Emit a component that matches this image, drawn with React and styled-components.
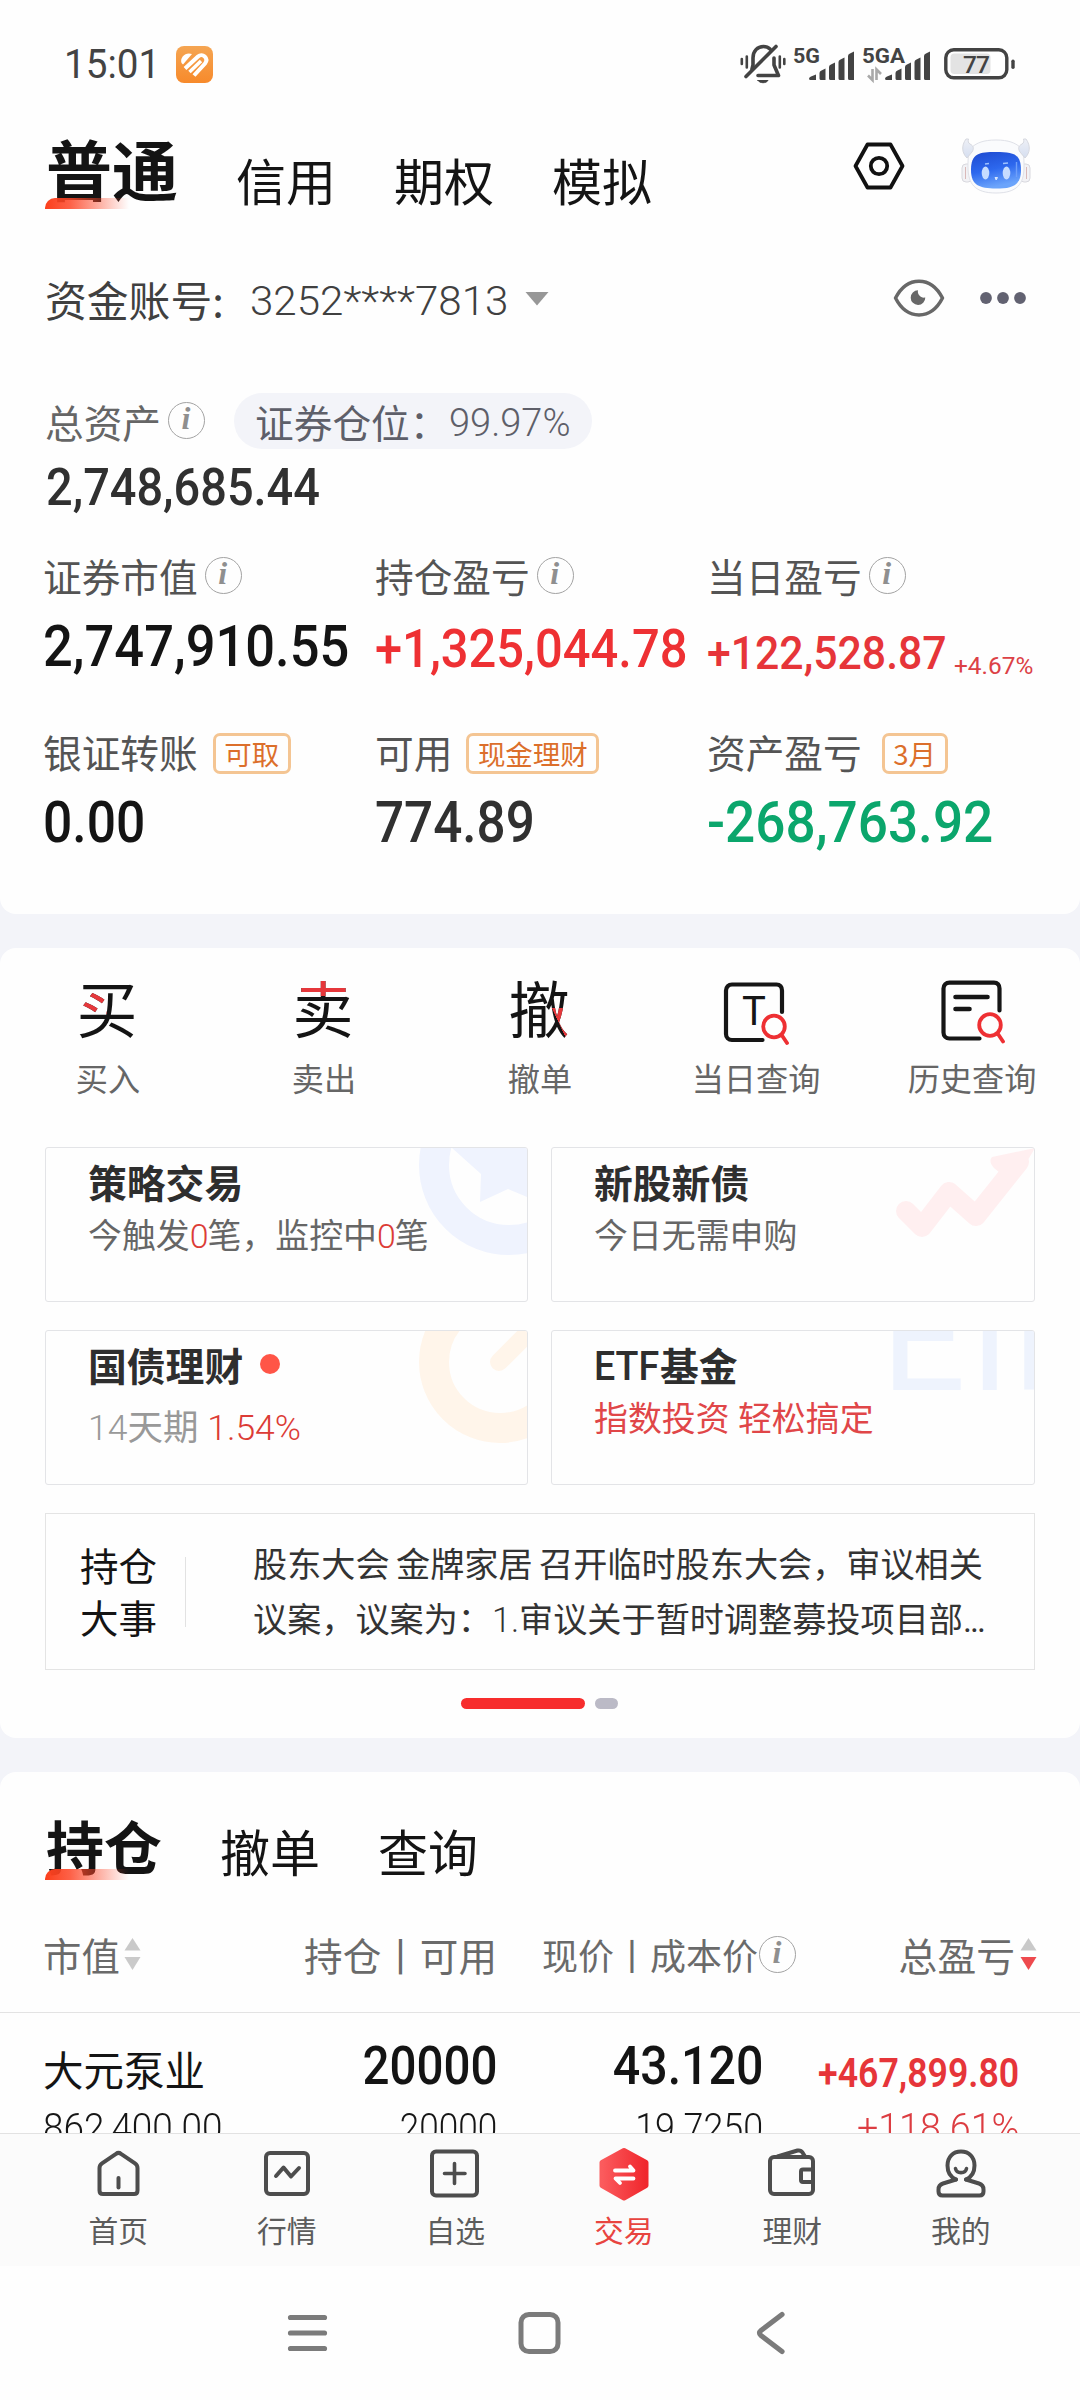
import React from "react";
import styled, { createGlobalStyle, css } from "styled-components";

const GlobalStyle = createGlobalStyle`
  * { box-sizing: border-box; }
  body { margin: 0; background: #fff; }
`;

const HAN = `"Noto Sans CJK SC", "Noto Sans", sans-serif`;
const MIX = `Roboto, "Noto Sans CJK SC", sans-serif`;

const RED = "#ee3033";
const INK = "#141414";

/* ---------- page frame ---------- */

const Page = styled.div`
  width: 1080px;
  height: 2400px;
  display: flex;
  flex-direction: column;
  overflow: hidden;
  background: #f3f4f9;
  font-family: ${HAN};
  color: ${INK};
`;

const Panel = styled.section`
  flex: none;
  height: ${(p) => p.$h}px;
  background: #fefefe;
  border-radius: ${(p) => p.$radius};
  overflow: hidden;
  margin-top: ${(p) => p.$gap || 0}px;
`;

const Num = styled.span`
  display: inline-block;
  font-family: ${MIX};
  font-size: ${(p) => p.$size}px;
  font-weight: ${(p) => p.$weight || 500};
  line-height: 1;
  white-space: nowrap;
  color: ${(p) => p.$color || "inherit"};
  transform-origin: ${(p) => (p.$right ? "right" : "left")} center;
  transform: translateY(${(p) => p.$dy || 0}px) scaleX(${(p) => p.$sx || 1});
`;

/* ---------- status bar ---------- */

const StatusBar = styled.div`
  height: 128px;
  padding: 0 64px 0 64px;
  display: flex;
  align-items: center;
  justify-content: space-between;
  color: #434343;
`;

const StatusGroup = styled.div`
  display: flex;
  align-items: center;
`;

const Clock = styled.div`
  width: 112px;
  height: 44px;
  line-height: 44px;
`;

/* ---------- tabs ---------- */

const TabBarRow = styled.div`
  display: flex;
  align-items: flex-end;
  gap: 58px;
  height: ${(p) => p.$h}px;
  padding: 0 49px 0 46px;
`;

const Tab = styled.div`
  position: relative;
  font-size: 50px;
  line-height: 56px;
  white-space: nowrap;
  ${(p) =>
    p.$active &&
    css`
      font-size: ${p.$active}px;
      line-height: ${p.$lh}px;
      font-weight: 700;
      &::after {
        content: "";
        position: absolute;
        left: -1px;
        bottom: -2px;
        width: 84px;
        height: 11px;
        border-top-left-radius: 10px;
        background: linear-gradient(90deg, #fb3f1c 0%, rgba(253, 70, 40, 0.85) 30%, rgba(255, 90, 70, 0) 100%);
      }
    `}
`;

const HeaderActions = styled.div`
  margin-left: auto;
  margin-top: -3px;
  align-self: center;
  display: flex;
  align-items: center;
  gap: 56px;
`;

/* ---------- account ---------- */

const AccountRow = styled.div`
  margin-top: 63px;
  height: 58px;
  padding: 0 54px 0 45px;
  display: flex;
  align-items: center;
  color: #404040;
`;

const AccountLabel = styled.div`
  width: 205px;
  font-size: 41.8px;
  line-height: 56px;
`;

const AccountNo = styled.div`
  width: 275px;
  height: 44px;
  line-height: 44px;
`;

const AccountTools = styled.div`
  margin-left: auto;
  margin-top: -2px;
  display: flex;
  align-items: center;
  gap: 35px;
`;

const AssetRow = styled.div`
  margin-top: 65px;
  height: 55px;
  padding-left: 45px;
  display: flex;
  align-items: center;
`;

const Label = styled.div`
  font-size: ${(p) => p.$size || 38.7}px;
  line-height: 40px;
  color: ${(p) => p.$color || "#545454"};
  white-space: nowrap;
`;

const InfoDot = styled.span`
  flex: none;
  width: 37px;
  height: 37px;
  margin-left: ${(p) => p.$ml ?? 7}px;
  border: 1.5px solid #a3a3a3;
  border-radius: 50%;
  color: #8f8f8f;
  font: italic 700 32px/31px "Liberation Serif", serif;
  text-align: center;
  padding-right: 1px;
`;

const RatioPill = styled.div`
  margin-left: 29px;
  width: 358px;
  height: 56px;
  padding-left: 21px;
  border-radius: 28px;
  background: #f3f4f9;
  color: #5e5f69;
  display: flex;
  align-items: center;
`;

const TotalValue = styled.div`
  margin-top: 13px;
  height: 54px;
  padding-left: 46px;
  display: flex;
  align-items: center;
`;

const MetricGrid = styled.div`
  margin-top: 40px;
  padding-left: 43px;
  display: grid;
  grid-template-columns: repeat(3, 332px);
  row-gap: 55px;
`;

const Metric = styled.div`
  display: flex;
  flex-direction: column;
  gap: 21px;
  min-width: 0;
`;

const MetricLabel = styled.div`
  height: 40px;
  display: flex;
  align-items: center;
`;

const MetricValue = styled.div`
  height: 60px;
  display: flex;
  align-items: center;
`;

const ValueSlot = styled.div`
  width: ${(p) => p.$w}px;
  flex: none;
  line-height: 1;
`;

const Tag = styled.span`
  margin: 5px 0 0 ${(p) => p.$ml}px;
  height: 41px;
  padding: 0 8.5px;
  border: 3px solid #f4c593;
  border-radius: 7px;
  color: #dc6f2b;
  font-family: ${HAN};
  font-size: 27.5px;
  line-height: 35px;
  white-space: nowrap;
`;

/* ---------- shortcuts ---------- */

const Shortcuts = styled.div`
  padding-top: 31px;
  display: grid;
  grid-template-columns: repeat(5, 216px);
`;

const Shortcut = styled.div`
  display: flex;
  flex-direction: column;
  align-items: center;
`;

const ShortcutIcon = styled.div`
  height: 66px;
  margin-bottom: 12px;
  display: flex;
  align-items: center;
  justify-content: center;
`;

const ShortcutLabel = styled.div`
  font-size: 32.2px;
  line-height: 40px;
  color: #666;
`;

const GlyphMark = styled.span`
  display: block;
  width: 61px;
  height: 66px;
  font-size: 61px;
  font-weight: 400;
  line-height: 66px;
  color: ${INK};
  background: ${(p) => p.$paint};
  -webkit-background-clip: text;
  background-clip: text;
  -webkit-text-fill-color: transparent;
  transform: translate(-1px, -5px);
`;

/* ---------- cards ---------- */

const CardGrid = styled.div`
  margin-top: 50px;
  padding: 0 45px;
  display: grid;
  grid-template-columns: 483px 1fr;
  column-gap: 23px;
  row-gap: 28px;
`;

const Card = styled.div`
  position: relative;
  height: 155px;
  padding: 9px 0 0 42px;
  border: 1.5px solid #e3e4e7;
  border-radius: 3px;
  overflow: hidden;
`;

const CardArt = styled.svg`
  position: absolute;
  right: -1px;
  top: -1px;
`;

const ArtWord = styled.div`
  position: absolute;
  left: 329px;
  bottom: 92px;
  font-family: Roboto, sans-serif;
  font-size: 149px;
  line-height: 106px;
  letter-spacing: -22px;
  color: #eef3fd;
  height: 106px;
  white-space: nowrap;
`;

const CardTitle = styled.div`
  position: relative;
  display: flex;
  align-items: center;
  font-size: 38.8px;
  font-weight: 700;
  line-height: 48px;
  color: #2e2e2e;
`;

const CardSub = styled.div`
  position: relative;
  margin-top: ${(p) => p.$mt || 12}px;
  font-family: ${MIX};
  font-size: ${(p) => p.$size || 33.9}px;
  font-weight: ${(p) => p.$weight || 400};
  line-height: 40px;
  color: ${(p) => p.$color || "#666"};
  white-space: nowrap;
`;

const Hot = styled.span`
  color: #dc3c36;
  font-weight: 350;
  letter-spacing: ${(p) => p.$ls || 0}px;
`;

const Thin = styled.span`
  font-weight: 350;
`;

const RedDot = styled.span`
  width: 20px;
  height: 20px;
  margin: -1px 0 0 17px;
  border-radius: 50%;
  background: #ff5547;
`;

const EventBox = styled.div`
  margin: 28px 45px 0;
  height: 157px;
  border: 1px solid #e4e4e4;
  display: flex;
  align-items: center;
  padding-left: 34px;
`;

const EventTitle = styled.div`
  width: 80px;
  font-size: 38.5px;
  line-height: 52px;
  margin-top: -4px;
`;

const EventRule = styled.div`
  width: 1px;
  height: 70px;
  margin: 0 67px 0 25px;
  background: #e2e2e2;
`;

const EventText = styled.div`
  padding-top: 2px;
  font-family: ${MIX};
  font-size: 34.15px;
  line-height: 55px;
  color: #333;
  white-space: nowrap;
  word-spacing: -2px;
`;

const Dots = styled.span`
  letter-spacing: -2px;
`;

const Pager = styled.div`
  margin-top: 28px;
  padding-right: 2px;
  display: flex;
  justify-content: center;
  gap: 10px;
`;

const PagerBar = styled.span`
  width: ${(p) => p.$w}px;
  height: 11px;
  border-radius: 6px;
  background: ${(p) => p.$color};
`;

/* ---------- holdings ---------- */

const HoldGrid = styled.div`
  display: grid;
  grid-template-columns: 230px 224px 299px 241px;
  padding-left: 43px;
`;

const HeadRow = styled(HoldGrid)`
  margin-top: 51px;
  height: 50px;
  align-items: center;
`;

const HeadCell = styled.div`
  display: flex;
  align-items: center;
  justify-content: ${(p) => (p.$right ? "flex-end" : "flex-start")};
`;

const SortMark = styled.svg`
  flex: none;
  margin-left: ${(p) => p.$ml}px;
`;

const StockRow = styled(HoldGrid)`
  margin-top: 33px;
  border-top: 1.5px solid #e3e3e3;
  padding-top: 30px;
`;

const StockCell = styled.div`
  display: flex;
  flex-direction: column;
  align-items: ${(p) => (p.$right ? "flex-end" : "flex-start")};
  padding-right: ${(p) => p.$pr || 0}px;
`;

const StockLine = styled.div`
  height: ${(p) => p.$h}px;
  display: flex;
  align-items: center;
  justify-content: inherit;
`;

/* ---------- bottom bars ---------- */

const TabBar = styled.nav`
  flex: none;
  height: 133px;
  padding: 0 35px 0 34px;
  border-top: 1.5px solid #e2e2e2;
  background: #fbfbfb;
  display: grid;
  grid-template-columns: repeat(6, 1fr);
`;

const TabItem = styled.div`
  display: flex;
  flex-direction: column;
  align-items: center;
  color: ${(p) => (p.$active ? "#e8443f" : "#5c5c5c")};
  font-size: 29.8px;
  line-height: 40px;
  svg {
    margin: 11px 0 6px;
  }
`;

const SystemNav = styled.div`
  flex: none;
  height: 134px;
  background: #fefefe;
  display: flex;
  justify-content: center;
  align-items: center;
  gap: 188px;
  padding-right: 3px;
`;

/* ---------- icons ---------- */

const AppBadge = () => (
  <svg width="37" height="37" viewBox="0 0 37 37">
    <defs>
      <linearGradient id="badge" x1="0" y1="0" x2="0" y2="1">
        <stop offset="0" stopColor="#f5a552" />
        <stop offset="1" stopColor="#f78a2b" />
      </linearGradient>
    </defs>
    <rect width="37" height="37" rx="8" fill="url(#badge)" />
    <path d="M5.500 17C3.500 11 10 5.500 16 8L7 18.500Z" fill="#fff" />
    <path d="M9 22.500L22 10.500C26.500 6.500 33 12 29 17.500L18 29.500" stroke="#fff" strokeWidth="4" fill="none" />
    <path d="M13.500 26L25 15" stroke="#fff" strokeWidth="3.400" fill="none" />
  </svg>
);

const MutedBellSvg = styled.svg`
  margin-right: 7px;
`;

const MutedBell = () => (
  <MutedBellSvg width="46" height="40" viewBox="0 0 46 40" fill="none" stroke="#434343" strokeWidth="3.600" strokeLinecap="round" strokeLinejoin="round">
    <path d="M12 25L13 21V14C13 7 17.500 2.500 23.500 2.500C26 2.500 28.500 3.500 30 5" />
    <path d="M34 14V21L38.500 31.500H18" />
    <path d="M6 32.500L36 2.500" />
    <path d="M18 36.500H28C26 39.500 20 39.500 18 36.500Z" fill="#434343" strokeWidth="1" />
    <path d="M1.800 15V20M6.800 12.500V23.500M39.800 12.500V23.500M44.300 15V20" strokeWidth="2.600" />
  </MutedBellSvg>
);

const BARS = [
  [0, 24, 7],
  [10.500, 18, 6],
  [20, 12, 6],
  [29.500, 7, 6],
  [39, 1, 6],
];

const Signal = ({ label, barsX, width, arrows }) => (
  <svg width={width} height="44" viewBox={`0 -4 ${width} 44`}>
    <text x="0" y="16.500" fontFamily="Roboto, sans-serif" fontWeight="700" fontSize="21" fill="#434343" textLength={label === "5G" ? 27 : 43} lengthAdjust="spacingAndGlyphs">
      {label}
    </text>
    {BARS.map(([x, y, w]) => (
      <path key={x} d={`M${barsX + x} ${y + 9}Q${barsX + x} ${y + 7} ${barsX + x + 2} ${y + 6.500}L${barsX + x + w} ${y + 4.500}V34H${barsX + x + 1.500}Q${barsX + x} 34 ${barsX + x} 32.500Z`} fill="#434343" />
    ))}
    {arrows && <path d="M10.500 23V34L6 29.500M14.500 34V23.500L19 28" stroke="#a9a9a9" strokeWidth="2.600" fill="none" />}
  </svg>
);

const Battery = () => (
  <svg width="72" height="32" viewBox="0 0 72 32">
    <rect x="1.800" y="1.800" width="61" height="28" rx="8" fill="#fff" stroke="#434343" strokeWidth="3.400" />
    <rect x="6.500" y="5.500" width="40" height="20.500" rx="4" fill="#e3e3e3" />
    <rect x="67.300" y="11.500" width="3.400" height="9.500" rx="1.700" fill="#434343" />
    <text x="32" y="24.700" textAnchor="middle" fontFamily="Roboto, sans-serif" fontSize="24.500" fontWeight="500" fill="#434343" letterSpacing="-0.800">
      77
    </text>
  </svg>
);

const HexNut = () => (
  <svg width="52" height="48" viewBox="0 0 52 48" fill="none" stroke="#111" strokeWidth="3.800" strokeLinejoin="round">
    <path d="M14.500 2.500H37.500L49.500 24L37.500 45.500H14.500L2.500 24Z" />
    <circle cx="26" cy="24" r="8.200" />
  </svg>
);

const Robot = () => (
  <svg width="70" height="56" viewBox="0 0 70 56">
    <defs>
      <linearGradient id="face" x1="0" y1="0" x2="0.300" y2="1">
        <stop offset="0" stopColor="#1d49cf" />
        <stop offset="0.550" stopColor="#2d68ee" />
        <stop offset="1" stopColor="#6ba4fb" />
      </linearGradient>
      <linearGradient id="horn" x1="0" y1="0" x2="0" y2="1">
        <stop offset="0" stopColor="#eef0f6" />
        <stop offset="1" stopColor="#d5def0" />
      </linearGradient>
    </defs>
    <rect x="1" y="26" width="10" height="18" rx="4" fill="#f2f2f5" stroke="#d8d8de" />
    <rect x="59" y="26" width="10" height="18" rx="4" fill="#f2f2f5" stroke="#d8d8de" />
    <path d="M4.500 29V41M65.500 29V41" stroke="#d9b9b9" strokeWidth="1" />
    <path d="M35 2C48 2 54 5 59 9C63 14 63 20 63 29C63 46 56 55 35 55C14 55 7 46 7 29C7 20 7 14 11 9C16 5 22 2 35 2Z" fill="#fafbfd" stroke="#dfe1e8" />
    <path d="M5 1C0 8 1 15 6 20L11 14C13 11 13 8 9 6C7 5 7 3 7.500 1Z" fill="url(#horn)" stroke="#d6d8df" />
    <path d="M65 1C70 8 69 15 64 20L59 14C57 11 57 8 61 6C63 5 63 3 62.500 1Z" fill="url(#horn)" stroke="#d6d8df" />
    <path d="M35 14C52 14 60 15.500 60 32C60 47 52 50.500 35 50.500C18 50.500 10 47 10 32C10 15.500 18 14 35 14Z" fill="url(#face)" />
    <ellipse cx="24.500" cy="35" rx="3.800" ry="6.500" fill="#c6dcff" />
    <ellipse cx="45.500" cy="35" rx="3.800" ry="6.500" fill="#c6dcff" />
    <path d="M24 26L28 25.500M42 25.500L47 25" stroke="#9ec2ff" strokeWidth="1.400" />
    <path d="M34 39.500H36.500L35.200 42Z" fill="#d7e6ff" stroke="#d7e6ff" />
    <path d="M55.500 24V39" stroke="#6f9ffa" strokeWidth="1.400" />
  </svg>
);

const Caret = () => (
  <svg width="24" height="14" viewBox="0 0 24 14">
    <path d="M0.500 0H23.500L12 13.500Z" fill="#979797" />
  </svg>
);

const Eye = () => (
  <svg width="52" height="38" viewBox="0 0 52 38">
    <path d="M2.500 19C14 -3.500 38 -3.500 49.500 19C38 41.500 14 41.500 2.500 19Z" fill="none" stroke="#686868" strokeWidth="3.500" strokeLinejoin="round" />
    <path d="M25 11.300A7.300 7.300 0 1 0 32.300 18.500C28 19.500 24 15.500 25 11.300Z" fill="#686868" />
  </svg>
);

const More = () => (
  <svg width="46" height="14" viewBox="0 0 46 14" fill="#626271">
    <circle cx="6" cy="7" r="5.900" />
    <circle cx="23" cy="7" r="5.900" />
    <circle cx="40" cy="7" r="5.900" />
  </svg>
);

const Magnifier = ({ x, y }) => (
  <g fill="none" stroke={RED} strokeWidth="3.800" strokeLinecap="round">
    <circle cx={x} cy={y} r="10.800" />
    <path d={`M${x + 8} ${y + 9}L${x + 13} ${y + 16.500}`} />
  </g>
);

const TodayIcon = () => (
  <svg width="66" height="66" viewBox="0 0 66 66">
    <g fill="none" stroke="#161616" strokeWidth="4.200" strokeLinecap="round">
      <path d="M59 33V11.500C59 8 57 5.500 53.500 5.500H9C5.500 5.500 3 8 3 11.500V55C3 58.500 5.500 61 9 61H39.500" />
    </g>
    <text x="31" y="45.500" textAnchor="middle" fontFamily="Roboto, sans-serif" fontSize="40" fontWeight="450" fill="#161616">
      T
    </text>
    <Magnifier x={51} y={47.500} />
  </svg>
);

const HistoryIcon = () => (
  <svg width="66" height="66" viewBox="0 0 66 66">
    <g fill="none" stroke="#161616" strokeWidth="4.200" strokeLinecap="round">
      <path d="M60.500 31.500V9.500C60.500 6 58.500 3.700 55 3.700H10.500C7 3.700 4.500 6 4.500 9.500V53.500C4.500 57 7 59.500 10.500 59.500H40.500" />
      <path d="M16.500 18H48.500M16.500 30H30.500" strokeWidth="4.600" />
    </g>
    <Magnifier x={51} y={46} />
  </svg>
);

const SortArrows = ({ down = "#cacaca", ml }) => (
  <SortMark $ml={ml} width="17" height="34" viewBox="0 0 17 34">
    <path d="M8.500 1L16.500 13.500H0.500Z" fill="#c9c9c9" />
    <path d="M8.500 33L0.500 20H16.500Z" fill={down} />
  </SortMark>
);

const TabSvg = ({ children }) => (
  <svg width="58" height="58" viewBox="0 0 58 58" fill="none" stroke="#4d4d4d" strokeWidth="4" strokeLinecap="round" strokeLinejoin="round">
    {children}
  </svg>
);

const HomeIcon = () => (
  <TabSvg>
    <path d="M10.500 23Q10.500 20 13 18.300L27 8.800Q29.500 7 32 8.800L46 18.300Q48.500 20 48.500 23V45.500Q48.500 49 45 49H14Q10.500 49 10.500 45.500Z" />
    <path d="M29.500 33V42.500" />
  </TabSvg>
);

const QuoteIcon = () => (
  <TabSvg>
    <rect x="8" y="8" width="42" height="41" rx="4" />
    <path d="M18 31L25.500 22.500L33 31.500L41 23" />
  </TabSvg>
);

const PickIcon = () => (
  <TabSvg>
    <rect x="6" y="6.500" width="45" height="44" rx="4" />
    <path d="M28.500 18.500V38.500M18.500 28.500H39" strokeWidth="3.600" />
  </TabSvg>
);

const TradeIcon = () => (
  <TabSvg>
    <defs>
      <linearGradient id="trade" x1="0" y1="0" x2="1" y2="0">
        <stop offset="0" stopColor="#fb5b5d" />
        <stop offset="1" stopColor="#f0272d" />
      </linearGradient>
    </defs>
    <path d="M29 5.500L51 17.500V40.500L29 53L7 40.500V17.500Z" fill="url(#trade)" stroke="url(#trade)" strokeWidth="5" />
    <path d="M20 25.500H38.500L35 21.500M38.500 33.500H20.500L25 38" stroke="#fff" strokeWidth="3.800" />
  </TabSvg>
);

const WalletIcon = () => (
  <TabSvg>
    <rect x="7" y="12" width="43" height="37" rx="4" />
    <path d="M14.500 11.500L34.500 5.500Q38 5 39.500 7.500L42 11.500" />
    <path d="M49.500 24.500H40Q38 24.500 38 26.500V35Q38 37 40 37H49.500" />
  </TabSvg>
);

const MeIcon = () => (
  <TabSvg>
    <path d="M24 34.500C16 31 15.500 24 15.500 20.500C15.500 12 21 6.500 29 6.500C37 6.500 42.500 12 42.500 20.500C42.500 24 42 31 34 34.500" />
    <path d="M24 34.500L11 38.500Q6.500 40 6.500 44.500V46.500Q6.500 50.500 10.500 50.500H47.500Q51.500 50.500 51.500 46.500V44.500Q51.500 40 47 38.500L34 34.500" />
    <path d="M23.500 23.500C24.500 29 33.500 29 34.500 23.500" strokeWidth="3.600" />
  </TabSvg>
);

/* ---------- data ---------- */

const METRICS = [
  { label: "证券市值", info: true, value: "2,747,910.55", size: 57.2, sx: 0.917, color: INK, dy: 1, w: 320 },
  { label: "持仓盈亏", info: true, value: "+1,325,044.78", size: 53.4, sx: 0.915, color: RED, dy: 3, w: 320 },
  { label: "当日盈亏", info: true, value: "+122,528.87", size: 46.9, sx: 0.912, color: "#e63539", dy: 7, w: 247, extra: "+4.67%" },
  { label: "银证转账", tag: "可取", tagGap: 15, value: "0.00", size: 57.7, sx: 0.895, color: INK, dy: 1, w: 320 },
  { label: "可用", tag: "现金理财", tagGap: 14, value: "774.89", size: 57.7, sx: 0.888, color: "#303030", dy: 1, w: 320 },
  { label: "资产盈亏", tag: "3月", tagGap: 20, value: "-268,763.92", size: 57.7, sx: 0.921, color: "#0ba66c", dy: 1, w: 320 },
];

const black = `linear-gradient(${INK}, ${INK})`;
const redFill = "linear-gradient(#e6373b, #e6373b)";

const SHORTCUTS = [
  { label: "买入", glyph: "买", paint: `${redFill} 0 17px / 30px 23px no-repeat, ${black}` },
  { label: "卖出", glyph: "卖", paint: `${redFill} 0 0 / 61px 22px no-repeat, ${black}` },
  { label: "撤单", glyph: "撤", paint: `linear-gradient(65deg, transparent 49%, #e6373b 50%) 40px 34px / 21px 32px no-repeat, ${black}` },
  { label: "当日查询", icon: <TodayIcon /> },
  { label: "历史查询", icon: <HistoryIcon /> },
];

const TABS = [
  ["首页", HomeIcon],
  ["行情", QuoteIcon],
  ["自选", PickIcon],
  ["交易", TradeIcon],
  ["理财", WalletIcon],
  ["我的", MeIcon],
];

export default function App() {
  return (
    <Page>
      <GlobalStyle />

      <Panel $h={914} $radius="0 0 16px 16px">
        <StatusBar>
          <StatusGroup>
            <Clock>
              <Num $size={41.5} $weight={400} $sx={0.93} $dy={1}>15:01</Num>
            </Clock>
            <AppBadge />
          </StatusGroup>
          <StatusGroup>
            <MutedBell />
            <Signal label="5G" barsX={16} width={69} />
            <Signal label="5GA" barsX={23} width={82} arrows />
            <Battery />
          </StatusGroup>
        </StatusBar>

        <TabBarRow $h={79}>
          <Tab $active={66} $lh={80}>普通</Tab>
          <Tab>信用</Tab>
          <Tab>期权</Tab>
          <Tab>模拟</Tab>
          <HeaderActions>
            <HexNut />
            <Robot />
          </HeaderActions>
        </TabBarRow>

        <AccountRow>
          <AccountLabel>资金账号:</AccountLabel>
          <AccountNo>
            <Num $size={41.3} $weight={350} $dy={4} $sx={1.02}>3252****7813</Num>
          </AccountNo>
          <Caret />
          <AccountTools>
            <Eye />
            <More />
          </AccountTools>
        </AccountRow>

        <AssetRow>
          <Label $color="#666">总资产</Label>
          <InfoDot>i</InfoDot>
          <RatioPill>
            <Label $color="#5e5f69">证券仓位：</Label>
            <Num $size={39} $weight={350} $sx={0.975} $dy={3}>99.97%</Num>
          </RatioPill>
        </AssetRow>
        <TotalValue>
          <Num $size={52} $sx={0.902} $color="#303030">2,748,685.44</Num>
        </TotalValue>

        <MetricGrid>
          {METRICS.map((m) => (
            <Metric key={m.label}>
              <MetricLabel>
                <Label>{m.label}</Label>
                {m.info && <InfoDot>i</InfoDot>}
                {m.tag && <Tag $ml={m.tagGap}>{m.tag}</Tag>}
              </MetricLabel>
              <MetricValue>
                <ValueSlot $w={m.w}>
                  <Num $size={m.size} $sx={m.sx} $color={m.color} $dy={m.dy}>{m.value}</Num>
                </ValueSlot>
                {m.extra && <Num $size={24.4} $weight={400} $color="#dc4146" $dy={20}>{m.extra}</Num>}
              </MetricValue>
            </Metric>
          ))}
        </MetricGrid>
      </Panel>

      <Panel $h={790} $gap={34} $radius="16px">
        <Shortcuts>
          {SHORTCUTS.map((s) => (
            <Shortcut key={s.label}>
              <ShortcutIcon>{s.icon || <GlyphMark $paint={s.paint}>{s.glyph}</GlyphMark>}</ShortcutIcon>
              <ShortcutLabel>{s.label}</ShortcutLabel>
            </Shortcut>
          ))}
        </Shortcuts>

        <CardGrid>
          <Card>
            <CardArt width="112" height="112" viewBox="0 0 112 112">
              <circle cx="93" cy="18" r="75" fill="none" stroke="#eff3fe" strokeWidth="30" />
              <path d="M36 1L76 -12L92 -40L108 -12L150 1L120 27L123 55L92 42L64 55L65 27Z" fill="#eff3fe" />
            </CardArt>
            <CardTitle>策略交易</CardTitle>
            <CardSub>
              今触发<Hot $ls={-1}>0</Hot>笔，监控中<Hot $ls={-1}>0</Hot>笔
            </CardSub>
          </Card>

          <Card>
            <CardArt width="144" height="100" viewBox="0 0 144 100">
              <path d="M15 64L31 80L58 45L85 69L128 15" fill="none" stroke="#ffeff0" strokeWidth="20" strokeLinecap="round" strokeLinejoin="round" />
              <path d="M101 10L144 1L122 38Q116 40 114 30L103 21Q97 14 101 10Z" fill="#ffeff0" />
            </CardArt>
            <CardTitle>新股新债</CardTitle>
            <CardSub>今日无需申购</CardSub>
          </Card>

          <Card>
            <CardArt width="112" height="116" viewBox="0 0 112 116">
              <circle cx="84" cy="32" r="66" fill="none" stroke="#fff5ea" strokeWidth="30" />
              <path d="M83 32L115 0" stroke="#fff5ea" strokeWidth="18" strokeLinecap="round" />
            </CardArt>
            <CardTitle>
              国债理财
              <RedDot />
            </CardTitle>
            <CardSub $mt={20} $size={35.5} $color="#999">
              <Thin>14</Thin>天期 <Hot>1.54%</Hot>
            </CardSub>
          </Card>

          <Card>
            <ArtWord>ETF</ArtWord>
            <CardTitle>
              <ValueSlot $w={66}>
                <Num $size={40} $weight={500} $sx={0.94} $dy={1}>ETF</Num>
              </ValueSlot>
              基金
            </CardTitle>
            <CardSub $color="#e04648">指数投资 轻松搞定</CardSub>
          </Card>
        </CardGrid>

        <EventBox>
          <EventTitle>
            持仓
            <br />
            大事
          </EventTitle>
          <EventRule />
          <EventText>
            <div>股东大会 金牌家居 召开临时股东大会，审议相关</div>
            <div>
              议案，议案为：<Thin>1.</Thin>审议关于暂时调整募投项目部<Dots>...</Dots>
            </div>
          </EventText>
        </EventBox>

        <Pager>
          <PagerBar $w={124} $color="#f72d2d" />
          <PagerBar $w={23} $color="#bbbac6" />
        </Pager>
      </Panel>

      <Panel $h={361} $gap={34} $radius="16px 16px 0 0">
        <TabBarRow $h={106}>
          <Tab $active={58} $lh={66}>持仓</Tab>
          <Tab>撤单</Tab>
          <Tab>查询</Tab>
        </TabBarRow>

        <HeadRow>
          <HeadCell>
            <Label $size={38.4} $color="#6a6a6a">市值</Label>
            <SortArrows ml={4} />
          </HeadCell>
          <HeadCell $right>
            <Label $size={38.6} $color="#6a6a6a">持仓丨可用</Label>
          </HeadCell>
          <HeadCell $right>
            <Label $size={36} $color="#6a6a6a">现价丨成本价</Label>
            <InfoDot $ml={1}>i</InfoDot>
          </HeadCell>
          <HeadCell $right>
            <Label $size={38.8} $color="#6a6a6a">总盈亏</Label>
            <SortArrows ml={5} down="#ee4a4e" />
          </HeadCell>
        </HeadRow>

        <StockRow>
          <StockCell>
            <StockLine $h={52}>
              <Label $size={40.5} $color={INK}>大元泵业</Label>
            </StockLine>
            <StockLine $h={67}>
              <Num $size={39} $weight={350} $sx={0.945} $color="#161616">862,400.00</Num>
            </StockLine>
          </StockCell>
          <StockCell $right>
            <StockLine $h={52}>
              <Num $right $size={54} $sx={0.88} $dy={-3}>20000</Num>
            </StockLine>
            <StockLine $h={67}>
              <Num $right $size={39} $weight={350} $sx={0.9} $color="#161616">20000</Num>
            </StockLine>
          </StockCell>
          <StockCell $right $pr={33}>
            <StockLine $h={52}>
              <Num $right $size={54} $sx={0.895} $dy={-3}>43.120</Num>
            </StockLine>
            <StockLine $h={67}>
              <Num $right $size={39} $weight={350} $sx={0.92} $color="#161616">19.7250</Num>
            </StockLine>
          </StockCell>
          <StockCell $right $pr={18}>
            <StockLine $h={52}>
              <Num $right $size={41} $weight={600} $sx={0.87} $dy={4} $color="#e63539">+467,899.80</Num>
            </StockLine>
            <StockLine $h={67}>
              <Num $right $size={39} $weight={350} $sx={0.965} $color="#dc3d42">+118.61%</Num>
            </StockLine>
          </StockCell>
        </StockRow>
      </Panel>

      <TabBar>
        {TABS.map(([label, Icon]) => (
          <TabItem key={label} $active={label === "交易"}>
            <Icon />
            {label}
          </TabItem>
        ))}
      </TabBar>

      <SystemNav>
        <svg width="44" height="44" viewBox="0 0 44 44" stroke="#7b7b7b" strokeWidth="5.200" strokeLinecap="round">
          <path d="M5.500 6.500H39.500M5.500 22H39.500M5.500 37.500H39.500" />
        </svg>
        <svg width="44" height="44" viewBox="0 0 44 44" fill="none" stroke="#7b7b7b" strokeWidth="5">
          <rect x="4" y="3.500" width="37" height="37" rx="8" />
        </svg>
        <svg width="44" height="44" viewBox="0 0 44 44" fill="none" stroke="#7b7b7b" strokeWidth="5.200" strokeLinecap="round" strokeLinejoin="round">
          <path d="M33 3.500L12 19.500Q9 22 12 24.500L33 40.500" />
        </svg>
      </SystemNav>
    </Page>
  );
}
